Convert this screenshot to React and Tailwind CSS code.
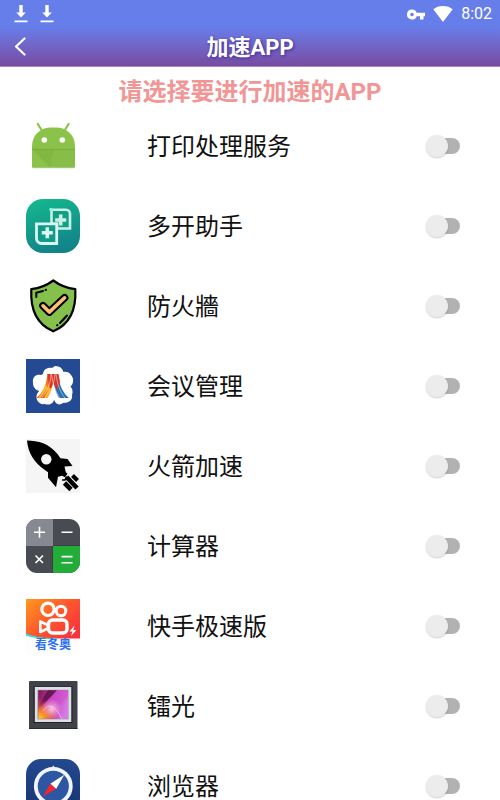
/**
 * @file App.jsx
 * @description Écran de sélection des applications à accélérer.
 */
import { useState } from "react";

function AndroidIcon() {
  return (
    <svg viewBox="0 0 54 54" className="size-full" aria-hidden="true">
      <path d="M11.8 5 15.8 11.500M42.600 5 38.600 11.500" stroke="#8bc34a" strokeWidth="2.2" strokeLinecap="round" />
      <path d="M6 46.500h43v1.200a1.600 1.600 0 0 1-1.600 1.600H7.600A1.600 1.600 0 0 1 6 47.700z" fill="#b9c9a6" />
      <path d="M6 30.500v-3C6 16 14.500 8.600 25 8.600h5C40.500 8.600 49 16 49 27.500v19.200a1.600 1.600 0 0 1-1.600 1.600H7.600A1.600 1.600 0 0 1 6 46.700z" fill="#8bc34a" />
      <path d="M6 30.300h43v16.400a1.600 1.600 0 0 1-1.600 1.600H24z" fill="#86be47" />
      <path d="M6 30.300h22L24 48.300z" fill="#7bb040" opacity="0.500" />
      <path d="M6 30.300 24 48.300H7.600A1.600 1.600 0 0 1 6 46.700z" fill="#8bc34a" />
      <path d="M6 30.300h43" stroke="#76a83e" strokeWidth="0.8" />
      <circle cx="18.3" cy="21" r="2.8" fill="#fff" />
      <circle cx="36.3" cy="21" r="2.8" fill="#fff" />
    </svg>
  );
}

function CloneIcon() {
  return (
    <svg viewBox="0 0 54 54" className="size-full" aria-hidden="true">
      <defs>
        <linearGradient id="clone-bg" x1="0" y1="0" x2="0.3" y2="1">
          <stop offset="0" stopColor="#14ba8f" />
          <stop offset="1" stopColor="#128589" />
        </linearGradient>
      </defs>
      <rect width="54" height="54" rx="17" fill="url(#clone-bg)" />
      <path d="M25.500 10.800H40a4 4 0 0 1 4 4v14.700H31v-4.700h-5.500z" fill="#129f88" stroke="#c9f1e5" strokeWidth="2.6" />
      <path d="M34.700 15.500v11M29.200 21h11" stroke="#c9f1e5" strokeWidth="3.6" />
      <path d="M10.500 24.800h20.200v19.700H15.500a5 5 0 0 1-5-5z" fill="#12998a" stroke="#d8f7ee" strokeWidth="2.8" />
      <path d="M21.300 28.300v11M15.800 33.800h11" stroke="#d8f7ee" strokeWidth="3.6" />
      <circle cx="25" cy="10.500" r="1.8" fill="#7dfbe0" />
    </svg>
  );
}

function ShieldIcon() {
  return (
    <svg viewBox="0 0 54 54" className="size-full" aria-hidden="true">
      <path
        d="M27.300 1.500C22 5.500 14 9.200 5.300 10.200 4.300 29 9 44.500 27.300 52.300 45.600 44.500 50.300 29 49.300 10.200 40.600 9.200 32.600 5.500 27.300 1.500z"
        fill="#84c04b"
        stroke="#000"
        strokeWidth="2.2"
        strokeLinejoin="round"
      />
      <path d="M10.300 18v-4.300L17 12M19.500 11l.5-.2M41 36.500l-7 7.500M31.500 46l-.5.3" fill="none" stroke="#000" strokeWidth="2" strokeLinecap="round" />
      <path d="m17 26.800 6.300 6.300 15.300-14.300" fill="none" stroke="#000" strokeWidth="7.6" strokeLinecap="round" strokeLinejoin="round" />
      <path d="m17 26.800 6.300 6.300 15.300-14.300" fill="none" stroke="#fdbf73" strokeWidth="3.6" strokeLinecap="round" strokeLinejoin="round" />
    </svg>
  );
}

function BlossomIcon() {
  return (
    <svg viewBox="0 0 54 54" className="size-full" aria-hidden="true">
      <defs>
        <linearGradient id="blossom-warm" x1="0.8" y1="0" x2="0.2" y2="1">
          <stop offset="0" stopColor="#e22c1e" />
          <stop offset="0.55" stopColor="#ff9a1a" />
          <stop offset="1" stopColor="#e8421c" />
        </linearGradient>
      </defs>
      <rect width="54" height="54" fill="#254a94" />
      <g fill="#fff">
        <path d="M17 18c-1-6 3-10 9-9l3-2c6 0 9 4 9 10z" />
        <path d="M33 17c2-5 9-6 12-1 3 3 3 9-1 12l-9 2z" />
        <path d="M38 25c7 0 10 6 8 11 1 5-3 8-9 8-4 3-8 1-9-4z" />
        <path d="M29 36c0 8-5 11-10 9-6 1-10-4-8-10l6-9z" />
        <path d="M20 31c-6 3-13 0-13-7-1-7 4-9 8-8 4-2 8 0 9 5z" />
        <circle cx="27" cy="26" r="15" />
      </g>
      <path d="M21.500 15h7c-1 11-3 18-7 24H10.500c6-5 10-13 11-24z" fill="url(#blossom-warm)" />
      <path d="M32 15h-6c1.500 11 3.500 18 7 24h10c-6-5-10-13-11-24z" fill="#2871b4" />
      <path d="M21.500 15h11l1.500 8-3 8-3.500-7-3.500 7z" fill="#d93626" />
      <path d="M25 15c0 9-4 18-9.500 24M29 15c-1 10-4 19-8.500 24M25.500 15c1 9 4 18 8.500 24M30 15c1 9 4 18 9 24" fill="none" stroke="#fff" strokeWidth="0.6" opacity="0.8" />
      <path d="M20 27c-2 6-4 9-7 12M24 29c-1 4-3 7-5 10" fill="none" stroke="#ffc22c" strokeWidth="1.8" />
    </svg>
  );
}

function RocketIcon() {
  return (
    <svg viewBox="0 0 54 54" className="size-full" aria-hidden="true">
      <rect width="54" height="54" fill="#f5f5f5" />
      <path d="M1 1.500c11 0 22 3 30.500 13.500l3 4.200 7 .8 5 7-8 .5 1.300 5.800 1.700 1.500-2.500 3.500-3-1.500-4 1-2 10.500-8-9.500v-5.500l-3.500-2.500C8.500 24 2 14 1 1.500z" fill="#000" />
      <circle cx="20.300" cy="20.300" r="5.200" fill="#f5f5f5" />
      <path d="m46.500 36.500 5 5" stroke="#000" strokeWidth="4" />
      <path d="m40.500 38 10.500 11" stroke="#000" strokeWidth="4.6" />
      <path d="m38.500 44 6.500 6.500" stroke="#000" strokeWidth="4.6" />
      <path d="M36 41h3l1.500-3.500" fill="none" stroke="#000" strokeWidth="1.5" />
    </svg>
  );
}

function CalculatorIcon() {
  return (
    <svg viewBox="0 0 54 54" className="size-full" aria-hidden="true">
      <clipPath id="calc-clip">
        <rect width="54" height="54" rx="11" />
      </clipPath>
      <g clipPath="url(#calc-clip)">
        <rect width="54" height="54" fill="#484b51" />
        <rect width="27" height="27" fill="#868991" />
        <rect x="27" y="27" width="27" height="27" fill="#22ac38" />
        <path d="M27 26.500h27M26.500 27v27" stroke="#3d4045" strokeWidth="1" />
      </g>
      <path d="M8 13.300h11M13.500 7.800v11M35.500 13.300h11M9.500 36.500l7.500 7.500M17 36.500 9.500 44M35.500 37.600h11M35.500 43.800h11" stroke="#fff" strokeWidth="1.6" />
    </svg>
  );
}

function KuaishouIcon() {
  return (
    <svg viewBox="0 0 54 54" className="size-full" aria-hidden="true">
      <defs>
        <linearGradient id="ks-bg" x1="0" y1="0" x2="1" y2="0.8">
          <stop offset="0" stopColor="#ff9a1c" />
          <stop offset="0.5" stopColor="#ff5a2c" />
          <stop offset="1" stopColor="#f8323c" />
        </linearGradient>
      </defs>
      <rect width="54" height="54" fill="#fdfdfe" />
      <path d="M0 0h54v39.500H20Q9 38.500 0 35.500z" fill="url(#ks-bg)" />
      <path d="M0 34.500q11 4.500 25 4.500l8 .8q-19 1-33-3z" fill="#25e3e6" />
      <g fill="none" stroke="#fff">
        <circle cx="22" cy="10.300" r="6.200" strokeWidth="3.2" />
        <circle cx="35" cy="12" r="4.800" strokeWidth="3" />
        <rect x="22.500" y="21" width="18.500" height="13" rx="4" strokeWidth="3.4" />
        <path d="m14.300 22.500 7.500 3.500v3.500l-7.500 3.500z" strokeWidth="2.6" strokeLinejoin="round" />
      </g>
      <path d="m48.500 26.500-5 6h3l-1.500 4.500 5.500-6h-3.200z" fill="#fff" />
      <text
        x="27"
        y="50"
        textAnchor="middle"
        fill="#2b6ff0"
        className="font-['Noto_Sans_CJK_SC',sans-serif] text-[12px] font-bold"
      >
        看冬奥
      </text>
    </svg>
  );
}

function GalleryIcon() {
  return (
    <svg viewBox="0 0 54 54" className="size-full" aria-hidden="true">
      <defs>
        <linearGradient id="gal-art" x1="0" y1="0.2" x2="1" y2="0.5">
          <stop offset="0" stopColor="#8e1560" />
          <stop offset="0.5" stopColor="#c03fb8" />
          <stop offset="1" stopColor="#d77be6" />
        </linearGradient>
        <radialGradient id="gal-glow" cx="0" cy="1" r="0.75">
          <stop offset="0" stopColor="#ffd81e" />
          <stop offset="0.45" stopColor="#f5781f" stopOpacity="0.9" />
          <stop offset="1" stopColor="#d8307d" stopOpacity="0" />
        </radialGradient>
        <radialGradient id="gal-light" cx="0.45" cy="0.65" r="0.35">
          <stop offset="0" stopColor="#ffe9f4" stopOpacity="0.8" />
          <stop offset="1" stopColor="#f4b2ec" stopOpacity="0" />
        </radialGradient>
      </defs>
      <rect x="3" y="2" width="48.500" height="48" rx="0.800" fill="#41414a" />
      <path d="M3 49.500h48.500" stroke="#2a2a31" strokeWidth="1.2" />
      <rect x="7.500" y="7.500" width="39" height="36.500" fill="#202026" />
      <rect x="8.800" y="8" width="36.500" height="35" fill="#dedfe4" />
      <rect x="11.500" y="10.800" width="31" height="29.500" fill="#8f8d99" />
      <rect x="12.300" y="11.300" width="29.700" height="28.500" fill="url(#gal-art)" />
      <path d="M22 11.300h9L15 29l-2.700-2z" fill="#4a0c3b" opacity="0.7" />
      <path d="M31 11.300 12.300 31v8.800h8L42 17v-5.700z" fill="#d450cd" opacity="0.6" />
      <rect x="12.300" y="11.300" width="29.700" height="28.500" fill="url(#gal-glow)" />
      <rect x="12.300" y="11.300" width="29.700" height="28.500" fill="url(#gal-light)" />
      <path d="M17 32q4-7 10-4 5 3 9 12" fill="none" stroke="#ffd9fb" strokeWidth="0.9" opacity="0.6" />
    </svg>
  );
}

function CompassIcon() {
  return (
    <svg viewBox="0 0 54 54" className="size-full" aria-hidden="true">
      <defs>
        <linearGradient id="compass-bg" x1="0" y1="0" x2="0" y2="1">
          <stop offset="0" stopColor="#24498f" />
          <stop offset="1" stopColor="#173372" />
        </linearGradient>
      </defs>
      <rect width="54" height="54" rx="15" fill="url(#compass-bg)" />
      <circle cx="27.300" cy="27.300" r="17.500" fill="#2d57a3" stroke="#f1f4fb" strokeWidth="3.8" />
      <path d="m27.300 6.500 2 2.500h-4z" fill="#f1f4fb" />
      <path d="m38.300 15.800-14 9 5.800 5.200z" fill="#fff" />
      <path d="m16.800 37.500 7.500-12.700 5.800 5.200z" fill="#f3262b" />
    </svg>
  );
}

const APPS = [
  { id: "print", name: "打印处理服务", Icon: AndroidIcon },
  { id: "clone", name: "多开助手", Icon: CloneIcon },
  { id: "firewall", name: "防火牆", Icon: ShieldIcon },
  { id: "meeting", name: "会议管理", Icon: BlossomIcon },
  { id: "rocket", name: "火箭加速", Icon: RocketIcon },
  { id: "calculator", name: "计算器", Icon: CalculatorIcon },
  { id: "kuaishou", name: "快手极速版", Icon: KuaishouIcon },
  { id: "gallery", name: "镭光", Icon: GalleryIcon },
  { id: "browser", name: "浏览器", Icon: CompassIcon },
];

function DownloadGlyph() {
  return (
    <svg viewBox="0 0 14 18" className="h-[18px] w-3.5" fill="#fff" aria-hidden="true">
      <path d="M5.300 0h3.400v7.500h3.100L7 12.400 2.200 7.500h3.100zM.5 15.500h13v1.800H.5z" />
    </svg>
  );
}

function StatusBar() {
  return (
    <div className="flex h-7 items-center justify-between pr-2 pl-3.5 text-white">
      <div className="flex gap-3">
        <DownloadGlyph />
        <DownloadGlyph />
      </div>
      <div className="flex items-center gap-2">
        <svg viewBox="0 0 18 11" className="h-[11px] w-[18px]" fill="#fff" aria-hidden="true">
          <path
            fillRule="evenodd"
            d="M5 .5a5 5 0 0 1 4.700 3.300H18v3.400h-1.500v3.300H13V7.200H9.700A5 5 0 1 1 5 .5zm0 3.200a1.800 1.800 0 1 0 0 3.600 1.800 1.800 0 0 0 0-3.600z"
          />
        </svg>
        <svg viewBox="0 0 20 16" className="h-4 w-5" fill="#fff" aria-hidden="true">
          <path d="M10 0C6 0 2.800 1.200.3 3.300L10 16l9.700-12.700C17.200 1.200 14 0 10 0z" />
        </svg>
        <span className="text-base leading-5">8:02</span>
      </div>
    </div>
  );
}

function AppRow({ app, checked, onToggle }) {
  const { id, name, Icon } = app;
  return (
    <li className="flex h-20 items-center pr-10 pl-[26px]">
      <div className="size-[54px] shrink-0">
        <Icon />
      </div>
      <label htmlFor={id} className="ml-[67px] flex-1 pt-0.5 text-2xl text-[#111]">
        {name}
      </label>
      <input
        id={id}
        type="checkbox"
        role="switch"
        checked={checked}
        onChange={() => onToggle(id)}
        className="relative h-4 w-8 shrink-0 cursor-pointer appearance-none rounded-full bg-[#b2b2b2] before:absolute before:-top-[3px] before:-left-0.5 before:size-[22px] before:rounded-full before:bg-[#ececec] before:shadow-[0_1px_2px_rgba(0,0,0,0.2)] checked:bg-[#a3b1f2] checked:before:left-3 checked:before:bg-[#667eea]"
      />
    </li>
  );
}

export default function App() {
  const [enabled, setEnabled] = useState({});

  const onToggle = (id) => {
    setEnabled((prev) => ({ ...prev, [id]: !prev[id] }));
  };

  return (
    <div
      lang="zh-CN"
      className="flex h-screen flex-col bg-white font-[Roboto,'Noto_Sans_CJK_SC',sans-serif]"
    >
      <header className="shrink-0 bg-linear-to-b from-[#667eea] from-40% to-[#764ba2] shadow-[0_1px_0_#a98bc4]">
        <StatusBar />
        <div className="grid grid-cols-[40px_1fr_40px] items-start pt-0.5">
          <button type="button" aria-label="返回" className="flex h-8 items-center pl-3.5">
            <svg viewBox="0 0 12 19" className="h-[19px] w-3" fill="none" aria-hidden="true">
              <path d="M10.500 1.500 2 9.500l8.500 8" stroke="#fff" strokeWidth="2.2" strokeLinecap="round" strokeLinejoin="round" />
            </svg>
          </button>
          <h1 className="text-center text-[22px] leading-9 font-bold text-white [text-shadow:1px_1px_3px_#3d2b9e]">
            加速APP
          </h1>
        </div>
      </header>

      <main className="min-h-0 flex-1 overflow-y-auto [scrollbar-width:none]">
        <h2 className="h-10 pt-2 text-center text-2xl leading-9 font-bold text-[#f19595]">
          请选择要进行加速的APP
        </h2>
        <ul>
          {APPS.map((app) => (
            <AppRow key={app.id} app={app} checked={Boolean(enabled[app.id])} onToggle={onToggle} />
          ))}
        </ul>
      </main>
    </div>
  );
}
